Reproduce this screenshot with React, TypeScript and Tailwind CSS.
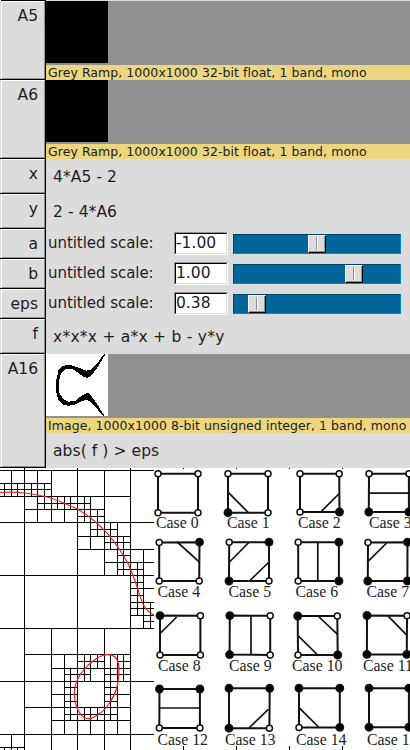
import React from "react";

type RowProps = { name: string; height: string; children: React.ReactNode };

function Row({ name, height, children }: RowProps) {
  return (
    <div className={`flex w-full ${height}`}>
      <div className="w-[46px] shrink-0 border-r border-b border-black pl-px">
        <div className="h-full border border-t-white border-l-white border-r-[#929292] border-b-[#929292] pr-[6px] pt-[4px] text-right text-[15.5px] leading-[20px]">
          {name}
        </div>
      </div>
      <div className="min-w-0 flex-1">{children}</div>
    </div>
  );
}

function Thumbnail({ caption, children }: { caption: string; children?: React.ReactNode }) {
  return (
    <>
      <div className="h-[64px] bg-[#909090]">
        <div className="h-[62px] w-[62px] bg-black">{children}</div>
      </div>
      <div className="h-[15px] overflow-hidden whitespace-nowrap bg-[#edd680] pl-[2px] text-[12.5px] leading-[15px] tracking-[0.055px]">
        {caption}
      </div>
    </>
  );
}

function Formula({ tracking, children }: { tracking: string; children: string }) {
  return (
    <div className={`h-[35px] whitespace-pre pt-[8px] pl-[7px] text-[15.5px] leading-[20px] ${tracking}`}>{children}</div>
  );
}

function Scale({ value, offset }: { value: string; offset: string }) {
  return (
    <div className="flex h-[30px]">
      <div className="w-[128px] pl-[2px] pt-[4px] text-[15px] leading-[20px] tracking-[-0.05px]">untitled scale:</div>
      <div className="mt-[3px] h-[23px] w-[54px] border border-t-[#929292] border-l-[#929292] border-r-white border-b-white">
        <div className="h-full border border-t-black border-l-black border-r-[#dcdcdc] border-b-[#dcdcdc] bg-white text-[15.5px] leading-[19px]">
          {value}
        </div>
      </div>
      <div className="mt-[5px] ml-[5px] h-[20px] w-[168px] border border-t-[#004466] border-l-[#004466] border-r-[#0088cc] border-b-[#0088cc] bg-[#006699]">
        <div className={`h-[18px] w-[18px] border border-t-white border-l-white border-r-black border-b-black ${offset}`}>
          <div className="flex h-full justify-center border-r border-b border-[#929292] bg-[#dcdcdc] pt-[1px] pl-px">
            <div className="h-[13px] w-[2px] border-r border-l border-r-white border-l-[#929292]" />
          </div>
        </div>
      </div>
    </div>
  );
}

const gridLines = [
  "M24 468V750M77 468V750M130 468V750",
  "M0 470H154M0 522H154M0 575H154M0 628H154M0 681H154M0 734H154",
  "M77 549H154M104 562H154M0 496H130M24 509H104M77 536H130M0 483H51M0 489H51",
  "M4 483V496M11 470V496M17 483V496M31 483V496M37 470V522M44 483V509M51 470V522M57 496V509M64 496V522M70 496V509",
  "M84 496V522M90 496V549M97 509V536M104 470V575M110 522V549M117 522V575M123 536V575M137 562V615M143 549V628M150 602V628",
  "M37 503H90M77 516H104M90 529H117M104 542H130M117 555H130M117 569H143M130 582H143M130 588H154M130 595H143M130 602H154M130 608H154M130 615H154M143 621H154",
  "M51 628V750M104 628V750M24 654H130M51 668H130M51 694H77M104 694H130M24 707H130M51 720H130",
  "M64 654V734M90 654V681M90 707V734M117 654V734M70 668V720M84 654V681M84 707V720M97 654V668M97 707V720M110 654V720M123 654V681",
  "M77 661H104M117 661H130M64 674H90M104 674H130M64 687H77M104 687H117M64 701H77M104 701H117M64 714H117",
  "M11 734V750M0 747H24M4 747V750M17 747V750",
].join("");

function Quadtree() {
  return (
    <svg className="block h-[282px] w-[154px] shrink-0" viewBox="0 468 154 282">
      <path d={gridLines} transform="translate(.5 .5)" stroke="#000" strokeWidth="1" strokeLinecap="square" shapeRendering="crispEdges" fill="none" />
      <g fill="none" stroke="#fb2020" strokeWidth="1.2">
        <path d="M0 492.5C8 492 17 492 25 493C38 494.5 49 496.5 60 501.5C73 507 83 511 92 519C103 528 110 535 117 546C124 556 127 560 130 568C137 584 138 592 143 604C146 610 149 613 154 615" />
        <path d="M106.7 654.6C113 654 117 658 118.4 663.5C120 672 118.5 680 117 687C115.5 694 113 698 110.3 701.7C107 707 104 710.5 100 713.3C96 716 93 718.5 89.3 718.7C85 719 82 716.5 80 713.3C76 707.5 74.5 702 74.4 694C74.4 688 76 681 80 675C82.5 671 85.5 668 88.3 665C92 661.5 99 655.2 106.7 654.6Z" />
      </g>
    </svg>
  );
}

type Pt = [number, number];
type Cell = { p: [Pt, Pt, Pt, Pt]; on: string; d: string; t: Pt };

// Corner order: top left, top right, bottom right, bottom left.
const cells: Cell[] = [
  { p: [[158, 473.7], [198, 473.7], [198, 512.7], [158, 512.7]], on: "0000", d: "", t: [156, 528] },
  { p: [[228, 473.7], [268, 473.7], [268, 512.7], [228, 512.7]], on: "0001", d: "M228.3 492.3L248.7 513", t: [227, 528] },
  { p: [[300, 473.7], [339.2, 473.7], [339.5, 512], [300, 512]], on: "0010", d: "M320.7 512L339.3 493.5", t: [298, 528] },
  { p: [[369, 473.7], [408.9, 473.7], [408.9, 512], [368.8, 512]], on: "0011", d: "M369 493.2H410", t: [369, 528] },
  { p: [[159.2, 542.4], [199.5, 542.2], [199.2, 581], [159.2, 581]], on: "0100", d: "M177.3 542L199.7 562.3", t: [157.5, 597] },
  { p: [[229.2, 542.2], [269, 542.2], [269, 581], [229, 581]], on: "0101", d: "M249.3 542L229.5 562M249.5 581L269 562", t: [228.5, 597] },
  { p: [[298.2, 542.2], [338.9, 542.2], [338.9, 581], [298.2, 581]], on: "0110", d: "M317.8 542V581", t: [295.5, 597] },
  { p: [[368, 542.4], [407.5, 542.2], [407.4, 581], [367.8, 581]], on: "0111", d: "M386.7 543L368 561.3", t: [366.5, 597] },
  { p: [[160, 615.6], [200.4, 615.7], [200.4, 654.9], [160, 654.9]], on: "1000", d: "M176.7 617L159.5 634", t: [158, 671] },
  { p: [[229.8, 615.6], [270.2, 615.7], [270.2, 654.9], [229.6, 654.6]], on: "1001", d: "M251 615.5V655", t: [229, 671] },
  { p: [[297.7, 616], [337.3, 616], [337.7, 655], [298, 655]], on: "1010", d: "M317.5 615.5L337.5 634.3M298 635.7L317.7 655", t: [292, 671] },
  { p: [[367, 615.5], [407, 615.7], [406.8, 654.4], [366.9, 654.4]], on: "1011", d: "M387.7 615.7L407.3 635.7", t: [363, 671] },
  { p: [[159.5, 689], [199.9, 689], [199.9, 728], [159.3, 728]], on: "1100", d: "M159 708H200", t: [157.5, 745] },
  { p: [[229, 688.3], [269.7, 688.3], [269.4, 728.2], [229, 728.2]], on: "1101", d: "M249 728L268.3 709.3", t: [225, 745] },
  { p: [[299, 688.2], [339.8, 688.2], [339.8, 727.4], [299, 727.4]], on: "1110", d: "M299 707.7L318.5 727", t: [296, 745] },
  { p: [[369, 688.2], [408.9, 688.2], [408.9, 727.2], [369, 727.2]], on: "1111", d: "", t: [367, 745] },
];

function Cases() {
  return (
    <svg className="block h-[282px] w-[256px] shrink-0 font-['Liberation_Serif',serif] text-[15.8px]" viewBox="154 468 256 282">
      <path d="M183.5 468V469M236.5 468V469M289.5 468V469M342.5 468V469M183.5 746V750M236.5 746V750M289.5 746V750M342.5 746V750" stroke="#000" />
      {cells.map((c, i) => (
        <g key={i} stroke="#111">
          <polygon points={c.p.map((q) => q.join(",")).join(" ")} fill="none" strokeWidth="2" />
          <path d={c.d} fill="none" strokeWidth="1.7" />
          {c.p.map(([x, y], k) => {
            const on = c.on[k] === "1";
            return <circle key={k} cx={x} cy={y} r={on ? 3.7 : 3} fill={on ? "#000" : "#fff"} strokeWidth="1.5" />;
          })}
          <text x={c.t[0]} y={c.t[1]} fill="#222" stroke="none">{`Case ${i}`}</text>
        </g>
      ))}
      <path d="M268 561.5h1M248 580.8h1" stroke="#d33" />
    </svg>
  );
}

export default function App() {
  return (
    <div className="h-[750px] w-[410px] overflow-hidden bg-white font-['DejaVu_Sans',sans-serif] text-[#1c1c1c]">
      <div className="bg-[#dcdcdc]">
        <div className="h-px pl-px">
          <div className="h-px w-[45px] bg-black" />
        </div>
        <Row name="A5" height="h-[79px]">
          <Thumbnail caption="Grey Ramp, 1000x1000 32-bit float, 1 band, mono" />
        </Row>
        <Row name="A6" height="h-[79px]">
          <Thumbnail caption="Grey Ramp, 1000x1000 32-bit float, 1 band, mono" />
        </Row>
        <Row name="x" height="h-[35px]"><Formula tracking="tracking-[0.08px]">4*A5 - 2</Formula></Row>
        <Row name="y" height="h-[35px]"><Formula tracking="tracking-[0.08px]">2 - 4*A6</Formula></Row>
        <Row name="a" height="h-[30px]"><Scale value="-1.00" offset="ml-[74px]" /></Row>
        <Row name="b" height="h-[30px]"><Scale value="1.00" offset="ml-[111px]" /></Row>
        <Row name="eps" height="h-[30px]"><Scale value="0.38" offset="ml-[14px]" /></Row>
        <Row name="f" height="h-[35px]"><Formula tracking="tracking-[0.24px]">x*x*x + a*x + b - y*y</Formula></Row>
        <Row name="A16" height="h-[114px]">
          <Thumbnail caption="Image, 1000x1000 8-bit unsigned integer, 1 band, mono">
            <svg className="block h-[62px] w-[62px] bg-white" viewBox="0 0 62 62" fill="#000" shapeRendering="crispEdges">
              <path d="M58 0L50 11L44 16L40 16.7L32 13.5L24 11L17 11.7L12.5 16.5L10 27.5V37.5L12.5 46L17 50.5L22.5 51.8L27.5 51L36 47L41 45.5L48 51L57 62H58.5L51 50L44 40L41 39L36 41.5L29 47L22.5 47.7L17.5 45L13.5 39L12.7 27.5L15 19.5L19 15.5L25.5 14.7L32 18.5L37.5 23L41.5 23.7L45 22L51 14L59.5 0Z" />
            </svg>
          </Thumbnail>
          <Formula tracking="tracking-[0.08px]">{"abs( f ) > eps"}</Formula>
        </Row>
      </div>
      <div className="flex">
        <Quadtree />
        <Cases />
      </div>
    </div>
  );
}
